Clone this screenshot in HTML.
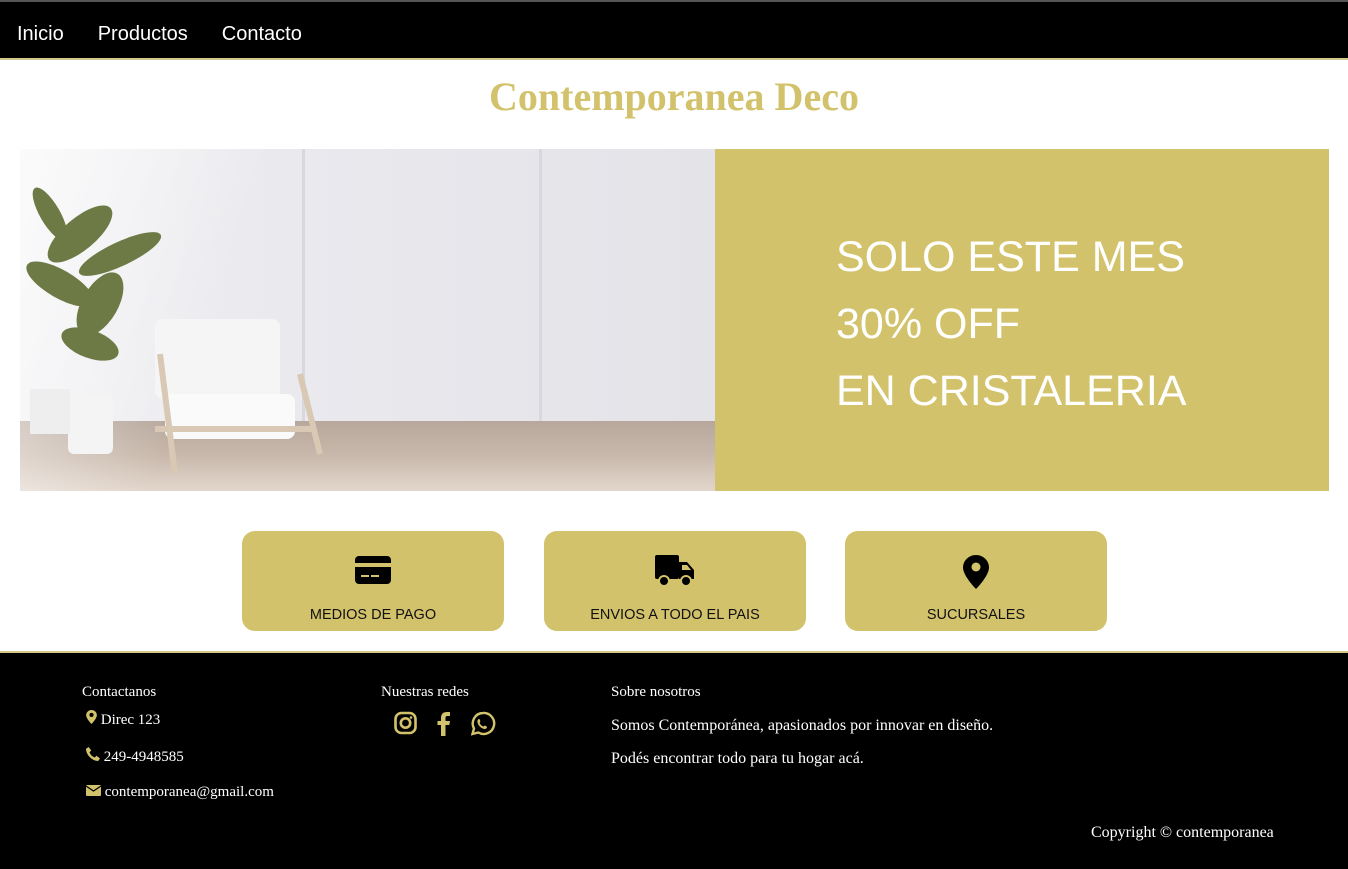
<!DOCTYPE html>
<html><head><meta charset="utf-8"><style>
*{margin:0;padding:0;box-sizing:border-box}
body{width:1348px;height:869px;background:#fff;overflow:hidden;font-family:"Liberation Serif",serif}
.top{height:2px;background:#555}
nav{height:58px;background:#000;border-bottom:2px solid #d6c78a;display:flex;align-items:center;padding-left:17px;padding-top:9px;font-family:"Liberation Sans",sans-serif;font-size:20px;color:#fff}
nav span{margin-right:34px}
h1{text-align:center;color:#d3c26c;font-size:40px;font-weight:bold;margin-top:15px;height:72px;line-height:44px}
.banner{position:absolute;left:20px;top:149px;width:1309px;height:342px;display:flex}
.img{width:695px;height:342px;position:relative;overflow:hidden;background:linear-gradient(90deg,#f1f1f3 0%,#e9e9ee 40%,#e3e3e8 100%)}
.floor{position:absolute;left:0;right:0;top:272px;bottom:0;background:linear-gradient(180deg,#b7a79c,#c9b9ac 50%,#e2d6cc)}
.gold{flex:1;background:#d3c26c;color:#fff;font-family:"Liberation Sans",sans-serif;font-size:43px;line-height:67px;padding:75px 0 0 121px}
.cards{position:absolute;top:531px;left:0;width:1348px}
.card{position:absolute;width:262px;height:100px;background:#d3c26c;border-radius:13px;text-align:center;font-family:"Liberation Sans",sans-serif;font-size:14.5px;color:#111}
.card svg{position:absolute;left:50%;transform:translateX(-50%);top:24px}
.card div{position:absolute;bottom:8px;width:100%}
footer{position:absolute;top:651px;left:0;width:1348px;height:218px;background:#000;border-top:2px solid #d6c78a;color:#fff;font-size:16px}
.a{position:absolute}
</style></head><body>
<div class="top"></div>
<nav><span>Inicio</span><span>Productos</span><span>Contacto</span></nav>
<h1>Contemporanea Deco</h1>
<div class="banner">
<div class="img">
<div class="floor"></div>
<div style="position:absolute;left:282px;top:0;width:3px;height:272px;background:#d8d8de"></div>
<div style="position:absolute;left:519px;top:0;width:3px;height:272px;background:#d8d8de"></div>
<div style="position:absolute;left:0;top:0;width:300px;height:342px;background:linear-gradient(110deg,rgba(255,255,255,.7),rgba(255,255,255,0) 60%)"></div>
<svg style="position:absolute;left:0;top:25px" width="180" height="290">
<g fill="#6d7a45"><ellipse cx="60" cy="60" rx="40" ry="16" transform="rotate(-40 60 60)"/><ellipse cx="100" cy="80" rx="45" ry="12" transform="rotate(-25 100 80)"/><ellipse cx="40" cy="110" rx="38" ry="14" transform="rotate(30 40 110)"/><ellipse cx="80" cy="130" rx="35" ry="18" transform="rotate(-60 80 130)"/><ellipse cx="70" cy="170" rx="30" ry="14" transform="rotate(20 70 170)"/><ellipse cx="30" cy="40" rx="30" ry="10" transform="rotate(60 30 40)"/></g>
<rect x="48" y="220" width="45" height="60" rx="6" fill="#f4f4f4"/>
<rect x="10" y="215" width="40" height="45" fill="#eeeeee"/>
</svg>
<svg style="position:absolute;left:115px;top:165px" width="200" height="170">
<rect x="20" y="5" width="125" height="80" rx="8" fill="#f5f5f5"/>
<rect x="30" y="80" width="130" height="45" rx="8" fill="#fafafa"/>
<path d="M25 40 L40 160 M165 60 L185 140 M20 115 L180 115" stroke="#d8c8b4" stroke-width="6" fill="none"/>
</svg>
</div>
<div class="gold">SOLO ESTE MES<br>30% OFF<br>EN CRISTALERIA</div>
</div>
<div class="cards">
<div class="card" style="left:242px"><svg width="36" height="30" viewBox="0 0 36 30"><rect x="0" y="1" width="36" height="28" rx="4" fill="#000"/><rect x="0" y="8" width="36" height="4" fill="#d3c26c"/><rect x="6" y="20" width="8" height="2" fill="#d3c26c"/><rect x="16" y="20" width="8" height="2" fill="#d3c26c"/></svg><div>MEDIOS DE PAGO</div></div>
<div class="card" style="left:544px"><svg width="40" height="32" viewBox="0 0 40 32"><rect x="0" y="0" width="24" height="24" rx="2" fill="#000"/><path d="M24 7h8l7 8v9H24z" fill="#000"/><path d="M27 10h5l4 5h-9z" fill="#d3c26c"/><circle cx="9" cy="26" r="5" fill="#000" stroke="#d3c26c" stroke-width="2"/><circle cx="31" cy="26" r="5" fill="#000" stroke="#d3c26c" stroke-width="2"/></svg><div>ENVIOS A TODO EL PAIS</div></div>
<div class="card" style="left:845px"><svg width="26" height="34" viewBox="0 0 26 34"><path d="M13 0C6 0 0 5.5 0 12.5 0 21 13 34 13 34S26 21 26 12.5C26 5.5 20 0 13 0z" fill="#000"/><circle cx="13" cy="12" r="4.5" fill="#d3c26c"/></svg><div>SUCURSALES</div></div>
</div>
<footer>
<div class="a" style="left:82px;top:31px;font-size:15px">Contactanos</div>
<div class="a" style="left:86px;top:57px;font-size:15px"><svg width="11" height="14" viewBox="0 0 26 34"><path d="M13 0C6 0 0 5.5 0 12.5 0 21 13 34 13 34S26 21 26 12.5C26 5.5 20 0 13 0z" fill="#d3c26c"/><circle cx="13" cy="12" r="5" fill="#000"/></svg> Direc 123</div>
<div class="a" style="left:86px;top:94px;font-size:15px"><svg width="14" height="14" viewBox="0 0 16 16"><path d="M3 0l3 4-2 2c1 3 3 5 6 6l2-2 4 3-2 3C7 16 0 9 0 2z" fill="#d3c26c"/></svg> 249-4948585</div>
<div class="a" style="left:86px;top:131px;font-size:15px"><svg width="15" height="11" viewBox="0 0 15 11"><rect width="15" height="11" rx="1" fill="#d3c26c"/><path d="M0 1l7.5 5L15 1" stroke="#000" stroke-width="1.3" fill="none"/></svg> contemporanea@gmail.com</div>
<div class="a" style="left:381px;top:31px;font-size:15px">Nuestras redes</div>
<svg class="a" style="left:394px;top:58px" width="102" height="26" viewBox="0 0 102 26">
<rect x="1.5" y="2" width="20" height="20" rx="6" fill="none" stroke="#d3c26c" stroke-width="2.6"/><circle cx="11.5" cy="12" r="4.7" fill="none" stroke="#d3c26c" stroke-width="2.6"/><circle cx="17" cy="6.5" r="1.3" fill="#d3c26c"/>
<path d="M47 25V14h-3.5v-4H47V7c0-4 2-6 6-6h3v4h-2.5c-1.5 0-2 .7-2 2v3h4.5l-.7 4H51.5v11z" fill="#d3c26c"/>
<path d="M89 2a10.5 10.5 0 0 0-9 15.5L78.5 23l5.8-1.5A10.5 10.5 0 1 0 89 2z" fill="none" stroke="#d3c26c" stroke-width="2.4"/><path d="M85 8c1 0 1.5 2.5 1.2 3-.3.5-.8.8-.5 1.3.8 1.5 2 2.6 3.5 3.2.5.2.8-.4 1.2-.8.3-.3 2.6.8 2.6 1.2 0 1.5-1.5 2.2-2.5 2.1-3-.3-6.5-3.5-7-6.6-.3-1.6.5-3.4 1.5-3.4z" fill="#d3c26c"/>
</svg>
<div class="a" style="left:611px;top:31px;font-size:15px">Sobre nosotros</div>
<div class="a" style="left:611px;top:64px">Somos Contemporánea, apasionados por innovar en diseño.</div>
<div class="a" style="left:611px;top:97px">Podés encontrar todo para tu hogar acá.</div>
<div class="a" style="left:1091px;top:171px">Copyright © contemporanea</div>
</footer>
</body></html>
